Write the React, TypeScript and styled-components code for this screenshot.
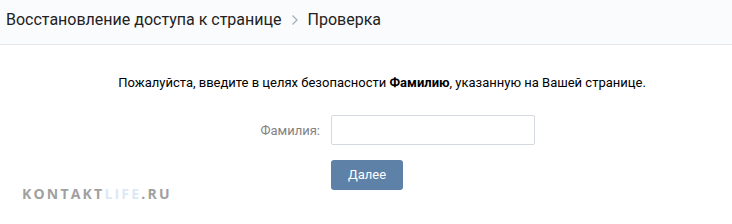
import { styled, createGlobalStyle } from "styled-components"

const Global = createGlobalStyle`
html, body {
  margin: 0;
  padding: 0;
  background: #ffffff;
}
body {
  font-family: Roboto, "Open Sans", Arial, sans-serif;
  color: #000;
}
`

const App = () => {
  return (
    <Page>
      <Global />
      <Header>
        <Crumb>Восстановление доступа к странице</Crumb>
        <Chevron viewBox="0 0 8 12" width="8" height="12">
          <path d="M1.5 1.5 L6 6 L1.5 10.5" fill="none" stroke="#a6aeb8" strokeWidth="1.3" />
        </Chevron>
        <Crumb>Проверка</Crumb>
      </Header>
      <Body>
        <Info>
          Пожалуйста, введите в целях безопасности <b>Фамилию</b>, указанную на Вашей странице.
        </Info>
        <Row>
          <Label>Фамилия:</Label>
          <Input />
        </Row>
        <Row>
          <Label />
          <Button>Далее</Button>
        </Row>
      </Body>
      <Watermark>
        KONTAKT<Light>LIFE</Light>.RU
      </Watermark>
    </Page>
  )
}

export default App

const Page = styled.div`
width: 732px;
height: 224px;
position: relative;
overflow: hidden;
`

const Header = styled.div`
height: 44px;
display: flex;
align-items: center;
padding: 0 0 0 6px;
background-color: #fafbfc;
border-bottom: 1px solid #e7e8ec;
`

const Crumb = styled.div`
font-size: 16px;
color: #222;
padding-bottom: 5px;
`

const Chevron = styled.svg`
margin: 0 8px 0 10px;
padding-bottom: 4px;
`

const Body = styled.div`
display: flex;
flex-direction: column;
align-items: center;
padding-top: 30px;
`

const Info = styled.div`
font-size: 13px;
color: #000;
margin-bottom: 25px;
margin-left: 32px;
b {
  font-weight: 700;
}
`

const Row = styled.div`
display: flex;
align-items: center;
margin-left: 34px;
margin-bottom: 15px;
width: 366px;
`

const Label = styled.div`
width: 120px;
text-align: right;
padding-right: 11px;
font-size: 13px;
color: #828282;
`

const Input = styled.input`
width: 204px;
height: 30px;
box-sizing: border-box;
border: 1px solid #d3d9de;
border-radius: 2px;
outline: none;
`

const Button = styled.div`
width: 72px;
height: 30px;
display: flex;
align-items: center;
justify-content: center;
border-radius: 3px;
background-color: #5e81a8;
color: white;
font-size: 13px;
padding-bottom: 1px;
box-sizing: border-box;
`

const Watermark = styled.div`
position: absolute;
left: 22px;
top: 184px;
font-family: "Open Sans", "DejaVu Sans", sans-serif;
font-weight: 700;
font-size: 14px;
letter-spacing: 2.2px;
color: #a0a0a0;
`

const Light = styled.span`
color: #dbe9f5;
`
